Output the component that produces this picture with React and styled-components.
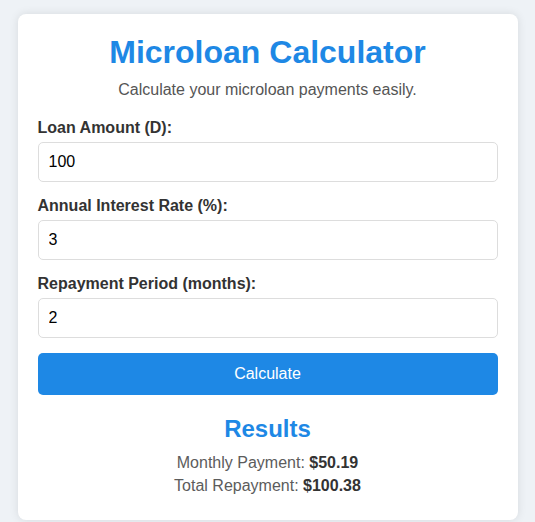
import { useState } from "react";
import styled, { createGlobalStyle } from "styled-components";

const GlobalStyle = createGlobalStyle`
  body {
    margin: 0;
    padding: 14px 0;
    background: #eef2f6;
    font-family: "Liberation Sans", Arial, sans-serif;
  }
  * {
    box-sizing: border-box;
  }
`;

const Card = styled.div`
  max-width: 500px;
  margin: 0 auto;
  padding: 20px;
  background: #fff;
  border-radius: 8px;
  box-shadow: 0 0 10px rgba(0, 0, 0, 0.1);
`;

const Title = styled.h1`
  margin: 0 0 10px;
  font-size: 32px;
  color: #1e88e5;
  text-align: center;
`;

const Subtitle = styled.p`
  margin: 0 0 20px;
  font-size: 16px;
  color: #555;
  text-align: center;
`;

const Field = styled.div`
  display: flex;
  flex-direction: column;
  gap: 5px;
  margin-bottom: 15px;
`;

const Label = styled.label`
  font-size: 16px;
  font-weight: bold;
  color: #333;
`;

const Input = styled.input`
  width: 100%;
  height: 40px;
  padding: 10px;
  font-family: inherit;
  font-size: 16px;
  color: #000;
  border: 1px solid #ddd;
  border-radius: 5px;
  outline: none;
`;

const Button = styled.button`
  width: 100%;
  height: 42px;
  border: none;
  border-radius: 5px;
  background: #1e88e5;
  color: #fff;
  font-family: inherit;
  font-size: 16px;
  cursor: pointer;
`;

const Results = styled.div`
  margin-top: 20px;
  text-align: center;
`;

const ResultsTitle = styled.h2`
  margin: 0 0 11px;
  font-size: 24px;
  color: #1e88e5;
`;

const ResultLine = styled.p`
  margin: 5px 0;
  font-size: 16px;
  color: #5c5c5c;

  strong {
    color: #333;
  }
`;

export default function App() {
  const [amount, setAmount] = useState("100");
  const [rate, setRate] = useState("3");
  const [months, setMonths] = useState("2");

  return (
    <>
      <GlobalStyle />
      <Card>
        <Title>Microloan Calculator</Title>
        <Subtitle>Calculate your microloan payments easily.</Subtitle>
        <Field>
          <Label>Loan Amount (D):</Label>
          <Input value={amount} onChange={(e) => setAmount(e.target.value)} />
        </Field>
        <Field>
          <Label>Annual Interest Rate (%):</Label>
          <Input value={rate} onChange={(e) => setRate(e.target.value)} />
        </Field>
        <Field>
          <Label>Repayment Period (months):</Label>
          <Input value={months} onChange={(e) => setMonths(e.target.value)} />
        </Field>
        <Button>Calculate</Button>
        <Results>
          <ResultsTitle>Results</ResultsTitle>
          <ResultLine>
            Monthly Payment: <strong>$50.19</strong>
          </ResultLine>
          <ResultLine>
            Total Repayment: <strong>$100.38</strong>
          </ResultLine>
        </Results>
      </Card>
    </>
  );
}
